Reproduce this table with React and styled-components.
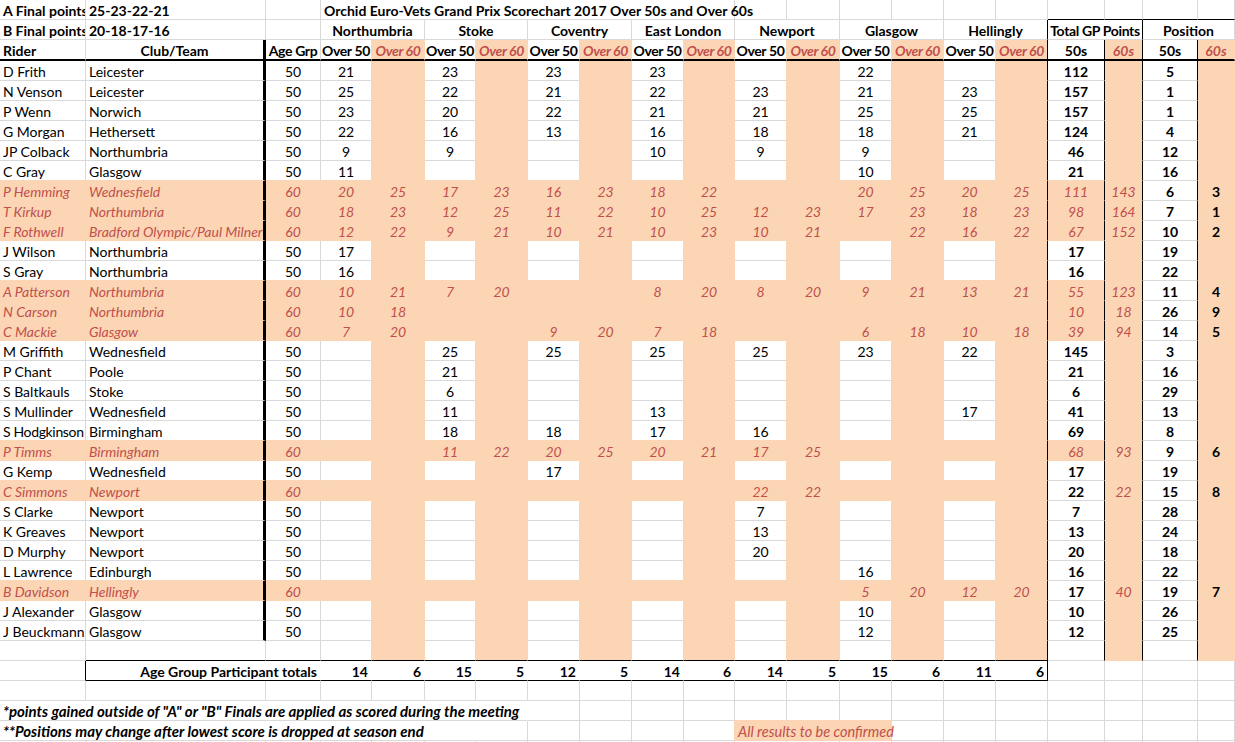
import React from "react";
import styled, { createGlobalStyle } from "styled-components";

const PEACH = "#fcd5b4";
const RED = "#c0504d";
const GRID = "#d9d9d9";

// column widths taken from the sheet: rider, club, age, 7 venues x 2, totals x 2, position x 2
const COLS = [86, 180, 55, 51, 53, 51, 52, 52, 52, 52, 51, 52, 53, 52, 52, 52, 52, 57, 38, 55, 37];

const VENUES = ["Northumbria", "Stoke", "Coventry", "East London", "Newport", "Glasgow", "Hellingly"];

const riders = [
  ["D Frith", "Leicester", 50, "21 - 23 - 23 - 23 - - - 22 - - -", "112", "", "5", ""],
  ["N Venson", "Leicester", 50, "25 - 22 - 21 - 22 - 23 - 21 - 23 -", "157", "", "1", ""],
  ["P Wenn", "Norwich", 50, "23 - 20 - 22 - 21 - 21 - 25 - 25 -", "157", "", "1", ""],
  ["G Morgan", "Hethersett", 50, "22 - 16 - 13 - 16 - 18 - 18 - 21 -", "124", "", "4", ""],
  ["JP Colback", "Northumbria", 50, "9 - 9 - - - 10 - 9 - 9 - - -", "46", "", "12", ""],
  ["C Gray", "Glasgow", 50, "11 - - - - - - - - - 10 - - -", "21", "", "16", ""],
  ["P Hemming", "Wednesfield", 60, "20 25 17 23 16 23 18 22 - - 20 25 20 25", "111", "143", "6", "3"],
  ["T Kirkup", "Northumbria", 60, "18 23 12 25 11 22 10 25 12 23 17 23 18 23", "98", "164", "7", "1"],
  ["F Rothwell", "Bradford Olympic/Paul Milner", 60, "12 22 9 21 10 21 10 23 10 21 - 22 16 22", "67", "152", "10", "2"],
  ["J Wilson", "Northumbria", 50, "17 - - - - - - - - - - - - -", "17", "", "19", ""],
  ["S Gray", "Northumbria", 50, "16 - - - - - - - - - - - - -", "16", "", "22", ""],
  ["A Patterson", "Northumbria", 60, "10 21 7 20 - - 8 20 8 20 9 21 13 21", "55", "123", "11", "4"],
  ["N Carson", "Northumbria", 60, "10 18 - - - - - - - - - - - -", "10", "18", "26", "9"],
  ["C Mackie", "Glasgow", 60, "7 20 - - 9 20 7 18 - - 6 18 10 18", "39", "94", "14", "5"],
  ["M Griffith", "Wednesfield", 50, "- - 25 - 25 - 25 - 25 - 23 - 22 -", "145", "", "3", ""],
  ["P Chant", "Poole", 50, "- - 21 - - - - - - - - - - -", "21", "", "16", ""],
  ["S Baltkauls", "Stoke", 50, "- - 6 - - - - - - - - - - -", "6", "", "29", ""],
  ["S Mullinder", "Wednesfield", 50, "- - 11 - - - 13 - - - - - 17 -", "41", "", "13", ""],
  ["S Hodgkinson", "Birmingham", 50, "- - 18 - 18 - 17 - 16 - - - - -", "69", "", "8", ""],
  ["P Timms", "Birmingham", 60, "- - 11 22 20 25 20 21 17 25 - - - -", "68", "93", "9", "6"],
  ["G Kemp", "Wednesfield", 50, "- - - - 17 - - - - - - - - -", "17", "", "19", ""],
  ["C Simmons", "Newport", 60, "- - - - - - - - 22 22 - - - -", "22", "22", "15", "8", true],
  ["S Clarke", "Newport", 50, "- - - - - - - - 7 - - - - -", "7", "", "28", ""],
  ["K Greaves", "Newport", 50, "- - - - - - - - 13 - - - - -", "13", "", "24", ""],
  ["D Murphy", "Newport", 50, "- - - - - - - - 20 - - - - -", "20", "", "18", ""],
  ["L Lawrence", "Edinburgh", 50, "- - - - - - - - - - 16 - - -", "16", "", "22", ""],
  ["B Davidson", "Hellingly", 60, "- - - - - - - - - - 5 20 12 20", "17", "40", "19", "7", true],
  ["J Alexander", "Glasgow", 50, "- - - - - - - - - - 10 - - -", "10", "", "26", ""],
  ["J Beuckmann", "Glasgow", 50, "- - - - - - - - - - 12 - - -", "12", "", "25", ""],
];

const participantTotals = ["14", "6", "15", "5", "12", "5", "14", "6", "14", "5", "15", "6", "11", "6"];

const GlobalStyle = createGlobalStyle`
  html, body {
    margin: 0;
    background: #fff;
  }
  body {
    font-family: Lato, "Open Sans", "Liberation Sans", sans-serif;
  }
`;

const Sheet = styled.div`
  display: grid;
  grid-template-columns: ${COLS.map((w) => `${w}px`).join(" ")};
  grid-template-rows: 20px 20px 21px;
  grid-auto-rows: 20px;
  width: 1235px;
  height: 742px;
  overflow: hidden;
  font-size: 14px;
  color: #000;
`;

const lineColor = (kind, own, next) => {
  if (kind === "black") return "#000";
  if (kind === "clear") return own;
  return own === PEACH || next === PEACH ? PEACH : GRID;
};

const Cell = styled.div`
  grid-column: span ${(p) => p.$span};
  box-sizing: border-box;
  min-width: 0;
  padding: 1px ${(p) => (p.$flush ? 0 : 3)}px 0;
  line-height: 19px;
  white-space: nowrap;
  overflow: ${(p) => (p.$spill ? "visible" : "hidden")};
  background: ${(p) => p.$bg};
  color: ${(p) => (p.$red ? RED : "#000")};
  font-size: ${(p) => p.$size || 14}px;
  font-weight: ${(p) => (p.$bold ? 700 : 400)};
  font-style: ${(p) => (p.$italic ? "italic" : "normal")};
  letter-spacing: ${(p) => (p.$tight ? "-0.35px" : "normal")};
  text-align: ${(p) => p.$align};
  border-right: ${(p) => (p.$right === "thick" ? 3 : 1)}px solid
    ${(p) => (p.$right === "thick" ? "#000" : lineColor(p.$right, p.$bg, p.$rightBg))};
  border-bottom: ${(p) => (p.$bottom === "thick" ? 2 : 1)}px solid
    ${(p) => (p.$bottom === "thick" ? "#000" : lineColor(p.$bottom, p.$bg, p.$belowBg))};
  position: relative;
  z-index: ${(p) => (p.$spill ? 1 : 0)};
`;

const mk = (text = "", o = {}) => ({ text, span: 1, fill: "white", align: "left", ...o });
const isPeachCol = (c) => c >= 4 && c % 2 === 0;
const edgeCol = (c) => c >= 16 && c <= 19;

function buildRows() {
  const rows = [];

  // header row 1
  const r1 = [
    mk("A Final points", { bold: true }),
    mk("25-23-22-21", { bold: true }),
    mk(),
    mk("Orchid Euro-Vets Grand Prix Scorechart 2017 Over 50s and Over 60s", {
      span: 8,
      bold: true,
      align: "center",
      spill: true,
    }),
  ];
  for (let c = 11; c <= 20; c++) r1.push(mk("", { bottom: c >= 17 ? "black" : "grid" }));
  rows.push(r1);

  // header row 2
  const r2 = [mk("B Final points", { bold: true }), mk("20-18-17-16", { bold: true }), mk()];
  VENUES.forEach((v, i) =>
    r2.push(mk(v, { span: 2, bold: true, align: "center", right: i === 6 ? "black" : "grid" }))
  );
  r2.push(
    mk("Total GP Points", {
      span: 2,
      bold: true,
      align: "center",
      right: "black",
      spill: true,
      tight: true,
      flush: true,
    })
  );
  r2.push(mk("Position", { span: 2, bold: true, align: "center" }));
  rows.push(r2);

  // header row 3
  const h = { bold: true, bottom: "thick" };
  const r3 = [
    mk("Rider", h),
    mk("Club/Team", { ...h, align: "center", right: "thick" }),
    mk("Age Grp", { ...h, align: "center", tight: true, flush: true }),
  ];
  for (let i = 0; i < 7; i++) {
    r3.push(mk("Over 50", { ...h, align: "center", tight: true, flush: true }));
    r3.push(
      mk("Over 60", {
        ...h,
        align: "center",
        fill: "peach",
        red: true,
        italic: true,
        tight: true,
        flush: true,
        right: i === 6 ? "black" : "grid",
      })
    );
  }
  r3.push(mk("50s", { ...h, align: "center", right: "black" }));
  r3.push(mk("60s", { ...h, align: "center", fill: "peach", red: true, italic: true, right: "black" }));
  r3.push(mk("50s", { ...h, align: "center", right: "black" }));
  r3.push(mk("60s", { ...h, align: "center", fill: "peach", red: true, italic: true }));
  rows.push(r3);

  // riders
  riders.forEach(([name, club, age, scores, t50, t60, p50, p60, whiteTotal]) => {
    const sixty = age === 60;
    const base = sixty ? { fill: "peach", red: true, italic: true } : {};
    const row = [
      mk(name, { ...base, tight: name.length > 11 }),
      mk(club, { ...base, right: "thick" }),
      mk(String(age), { ...base, align: "center" }),
    ];
    scores.split(" ").forEach((s, i) => {
      const c = 3 + i;
      row.push(
        mk(s === "-" ? "" : s, {
          ...base,
          align: "center",
          fill: sixty || isPeachCol(c) ? "peach" : "white",
          right: c === 16 ? "black" : "grid",
        })
      );
    });
    const plainTotal = !sixty || whiteTotal;
    row.push(
      mk(t50, {
        align: "center",
        right: "black",
        fill: plainTotal ? "white" : "peach",
        bold: plainTotal,
        red: !plainTotal,
        italic: !plainTotal,
      })
    );
    row.push(mk(t60, { align: "center", fill: "peach", red: true, italic: true, right: "black" }));
    row.push(mk(p50, { align: "center", bold: true, right: "black" }));
    row.push(mk(p60, { align: "center", bold: true, fill: "peach" }));
    rows.push(row);
  });

  // gap under the riders, top edge of the totals box
  const gap = [];
  for (let c = 0; c <= 20; c++)
    gap.push(
      mk("", {
        fill: isPeachCol(c) ? "peach" : "white",
        right: edgeCol(c) ? "black" : "grid",
        bottom: c >= 1 && c <= 16 ? "black" : "grid",
      })
    );
  rows.push(gap);

  // participant totals
  const tot = [
    mk("", { right: "black" }),
    mk("Age Group Participant totals", { span: 2, bold: true, align: "right", right: "clear", bottom: "black" }),
  ];
  participantTotals.forEach((n, i) =>
    tot.push(mk(n, { bold: true, align: "right", right: i === 13 ? "black" : "clear", bottom: "black" }))
  );
  for (let c = 17; c <= 20; c++) tot.push(mk());
  rows.push(tot);

  rows.push(Array.from({ length: 21 }, () => mk()));

  const note1 = [
    mk('*points gained outside of "A" or "B" Finals are applied as scored during the meeting', {
      span: 7,
      bold: true,
      italic: true,
      size: 15,
      right: "clear",
    }),
  ];
  for (let c = 7; c <= 20; c++) note1.push(mk());
  rows.push(note1);

  const note2 = [
    mk("**Positions may change after lowest score is dropped at season end", {
      span: 6,
      bold: true,
      italic: true,
      size: 15,
      right: "clear",
    }),
  ];
  for (let c = 6; c <= 10; c++) note2.push(mk());
  note2.push(
    mk("All results to be confirmed", { span: 3, fill: "peach", red: true, italic: true, size: 14.5, spill: true })
  );
  for (let c = 14; c <= 20; c++) note2.push(mk());
  rows.push(note2);

  rows.push(Array.from({ length: 21 }, () => mk()));
  return rows;
}

const fillOf = (cell) => (cell && cell.fill === "peach" ? PEACH : "#fff");

function cellAt(row, col) {
  if (!row) return null;
  let c = 0;
  for (const cell of row) {
    if (col >= c && col < c + cell.span) return cell;
    c += cell.span;
  }
  return null;
}

const App = () => {
  const rows = buildRows();
  return (
    <>
      <GlobalStyle />
      <Sheet>
        {rows.map((row, r) => {
          let col = 0;
          return row.map((cell, i) => {
            const start = col;
            col += cell.span;
            return (
              <Cell
                key={`${r}-${i}`}
                $span={cell.span}
                $bg={fillOf(cell)}
                $rightBg={fillOf(row[i + 1])}
                $belowBg={fillOf(cellAt(rows[r + 1], start))}
                $red={cell.red}
                $bold={cell.bold}
                $italic={cell.italic}
                $align={cell.align}
                $spill={cell.spill}
                $tight={cell.tight}
                $flush={cell.flush}
                $size={cell.size}
                $right={cell.right || "grid"}
                $bottom={cell.bottom || "grid"}
              >
                {cell.text}
              </Cell>
            );
          });
        })}
      </Sheet>
    </>
  );
};

export default App;
